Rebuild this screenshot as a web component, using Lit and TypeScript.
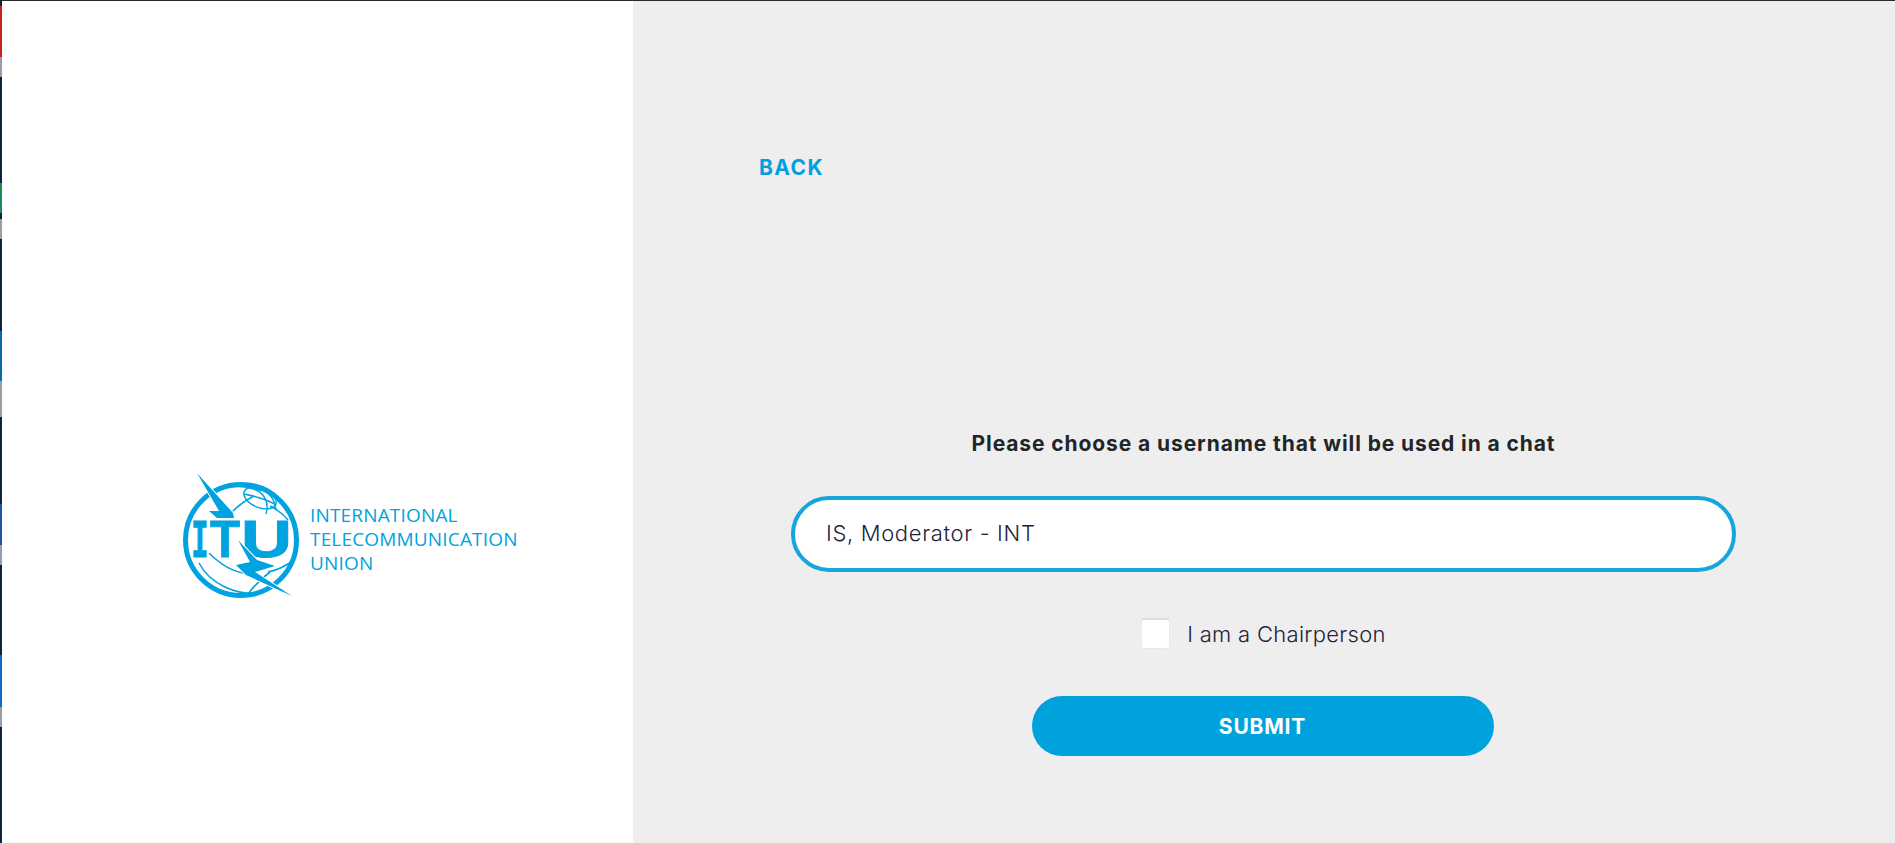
import { LitElement, html, css, svg } from "lit";
import { customElement } from "lit/decorators.js";

const STRIP: [number, string][] = [
  [6, "#0e2240"], [51, "#c8201b"], [20, "#9a9ea6"], [106, "#0e2240"], [30, "#1c8a5c"], [6, "#0e2240"],
  [20, "#9a9ea6"], [92, "#0e2240"], [50, "#0868a8"], [36, "#9a9ea6"], [87, "#0e2240"], [41, "#2255a0"],
  [20, "#9a9ea6"], [90, "#0e2240"], [52, "#0a6cc4"], [20, "#9a9ea6"], [116, "#0e2240"],
];

const BLUE = "#00a3e0";

const globe = svg`
  <g fill="none" stroke=${BLUE}>
    <circle cx="241" cy="540" r="55.5" stroke-width="5"></circle>
    <path stroke-width="1.6" d="M212 491 C228 484 250 486 262 491 M232 512 C240 504 246 500 254 496 M270 506 C278 510 284 515 288 520"></path>
    <path stroke-width="1.6" d="M209 553 C226 570 240 574 254 574 M268 572 C278 570 286 566 294 560"></path>
    <path stroke-width="1.6" d="M199 563 C210 584 236 596 262 593 M248 594 C254 586 262 578 270 572"></path>
    <g stroke-width="1.4">
      <ellipse cx="260" cy="498" rx="17" ry="9.5" transform="rotate(22 260 498)"></ellipse>
      <path d="M249 488 C262 490 270 500 266 514 M262 489 C272 494 276 504 276 510 M244 494 C254 496 268 500 276 505"></path>
    </g>
  </g>
  <text class="itu mono" transform="translate(191 557) scale(0.6 1)">I</text>
  <text class="itu" x="210" y="557" textLength="30" lengthAdjust="spacingAndGlyphs">T</text>
  <text class="itu" x="241" y="557" textLength="51" lengthAdjust="spacingAndGlyphs">U</text>
  <path fill=${BLUE} stroke="#fff" stroke-width="2" paint-order="stroke" d="M197 473 L233 513 L234 518 L217 518 L209 511 L219 511 Z"></path>
  <path fill=${BLUE} stroke="#fff" stroke-width="2" paint-order="stroke" d="M238 540 L257 560 L275 566 L255 572 L292 596 L246 575 L236 565 L250 562 Z"></path>
`;

@customElement("app-root")
export class AppRoot extends LitElement {
  static styles = css`
    :host {
      display: flex;
      width: 100%;
      height: 843px;
      overflow: hidden;
      font-family: "Inter", "Liberation Sans", sans-serif;
      color: #212529;
      background: #fff;
    }
    .strip {
      flex: 0 0 2px;
      display: flex;
      flex-direction: column;
    }
    .main {
      flex: 1;
      display: flex;
      flex-direction: column;
      min-width: 0;
    }
    .topline {
      flex: 0 0 1px;
      background: #2a2a2a;
    }
    .panes {
      flex: 1;
      display: flex;
      min-height: 0;
    }
    .left {
      flex: 0 0 631px;
      box-sizing: border-box;
      background: #fff;
      padding: 459px 0 0 168px;
    }
    .logo {
      display: flex;
      align-items: flex-start;
    }
    .logo svg {
      display: block;
      flex: none;
    }
    .itu {
      font-family: "Liberation Sans", sans-serif;
      font-weight: 700;
      font-size: 52px;
      fill: #00a3e0;
      stroke: #00a3e0;
      stroke-width: 0.8px;
    }
    .mono {
      font-family: "DejaVu Sans Mono", "Liberation Mono", monospace;
      font-size: 49px;
    }
    .logotext {
      margin: 43px 0 0 0;
      font-family: "Open Sans", sans-serif;
      font-size: 19px;
      line-height: 24px;
      letter-spacing: 0.17px;
      color: #00a3e0;
    }
    .right {
      flex: 1;
      background: #eeeeee;
      padding: 155px 159px 0 126px;
      display: flex;
      flex-direction: column;
      min-width: 0;
    }
    .back {
      font-size: 21px;
      font-weight: 700;
      line-height: 24px;
      letter-spacing: 1.4px;
      color: #009fdf;
      text-decoration: none;
      align-self: flex-start;
    }
    form {
      margin: 251px 0 0 0;
      padding-left: 32px;
      display: flex;
      flex-direction: column;
      align-items: center;
    }
    h2 {
      margin: 0;
      font-size: 21px;
      line-height: 26px;
      font-weight: 700;
      letter-spacing: 0.9px;
    }
    .field {
      box-sizing: border-box;
      width: 100%;
      height: 76px;
      margin-top: 39px;
      padding: 0 31px 3px;
      border: 4px solid #18a4dd;
      border-radius: 38px;
      background: #fff;
      font: 300 22px "Inter", "Liberation Sans", sans-serif;
      letter-spacing: 0.66px;
      color: #23233a;
      outline: none;
    }
    .check {
      display: flex;
      align-items: center;
      gap: 17px;
      margin-top: 46px;
      font-size: 22px;
      font-weight: 300;
      letter-spacing: 0.3px;
      color: #23233a;
    }
    .check input {
      appearance: none;
      box-sizing: border-box;
      width: 29px;
      height: 31px;
      margin: 0;
      background: #fff;
      border: 1px solid #e8e8e8;
      border-top: 2px solid #dcdcdc;
      border-radius: 3px;
    }
    .submit {
      width: 462px;
      height: 60px;
      margin: 47px 2px 0 0;
      border: none;
      border-radius: 30px;
      background: #00a2dd;
      color: #fff;
      font: 700 21px "Inter", "Liberation Sans", sans-serif;
      letter-spacing: 0.8px;
    }
  `;

  render() {
    return html`
      <div class="strip">
        ${STRIP.map(([h, c]) => html`<span style="height:${h}px;background:${c}"></span>`)}
      </div>
      <div class="main">
        <div class="topline"></div>
        <div class="panes">
          <div class="left">
            <div class="logo">
              <svg width="140" height="145" viewBox="170 460 140 145">${globe}</svg>
              <div class="logotext">INTERNATIONAL<br />TELECOMMUNICATION<br />UNION</div>
            </div>
          </div>
          <div class="right">
            <a class="back" href="#">BACK</a>
            <form>
              <h2>Please choose a username that will be used in a chat</h2>
              <input class="field" type="text" value="IS, Moderator - INT" />
              <label class="check"><input type="checkbox" /><span>I am a Chairperson</span></label>
              <button class="submit" type="button">SUBMIT</button>
            </form>
          </div>
        </div>
      </div>
    `;
  }
}
